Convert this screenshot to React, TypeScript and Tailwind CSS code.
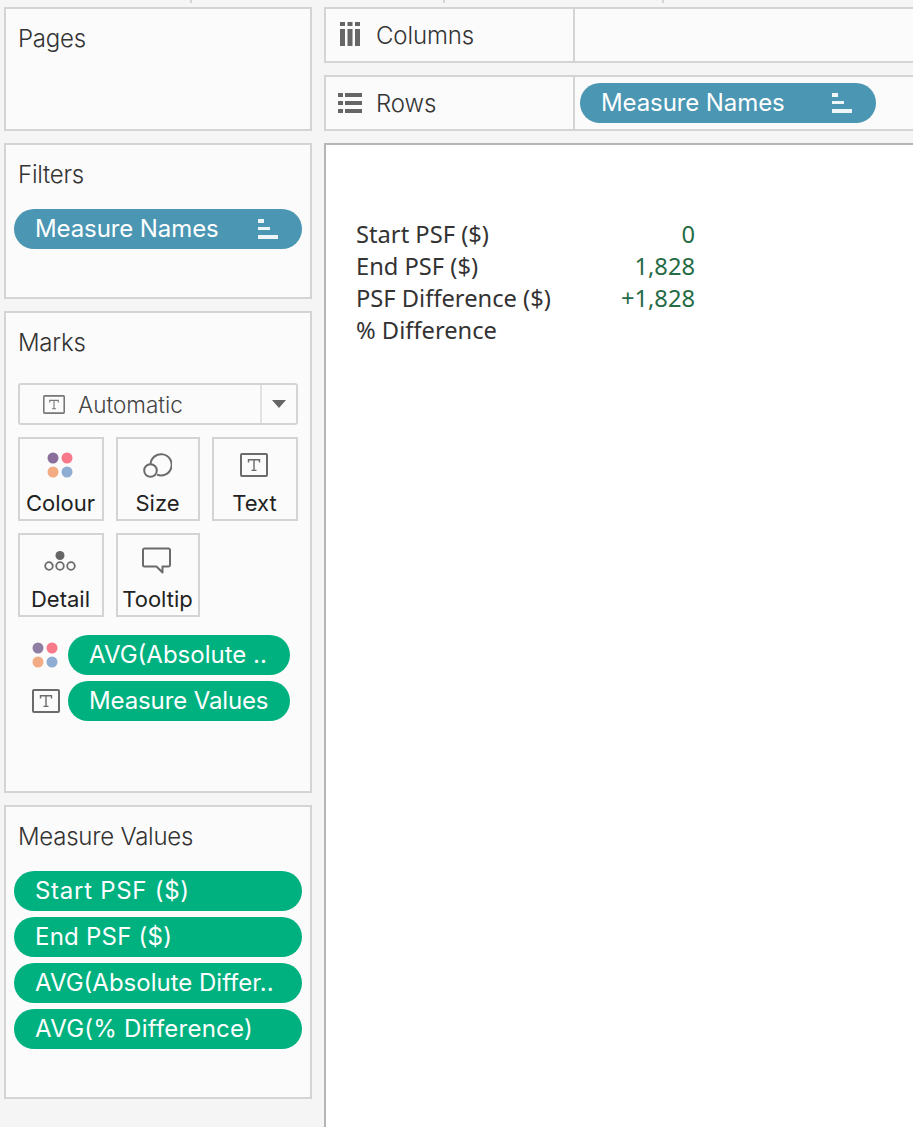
import React from "react";

const uiFont = "font-['Inter','Noto_Sans',sans-serif]";

function SortIcon() {
  return (
    <svg width="20" height="20" viewBox="0 0 20 20" className="block shrink-0" fill="#ecf5f8">
      <rect x="0" y="0" width="6" height="4" />
      <rect x="0" y="8" width="12" height="3" />
      <rect x="0" y="16" width="20" height="4" />
    </svg>
  );
}

function TIcon({ w, h, stroke = "#6b6b6b" }: { w: number; h: number; stroke?: string }) {
  return (
    <svg width={w} height={h} viewBox="0 0 28 24" className="block shrink-0" fill="none">
      <rect x="1" y="1" width="26" height="22" rx="1" stroke={stroke} strokeWidth="2" />
      <path d="M8.5 9.5V6.8h11v2.7M14 6.8v10.6M11.5 17.4h5" stroke={stroke} strokeWidth="1.4" />
    </svg>
  );
}

function DotsIcon({ size = 26, faded = false }: { size?: number; faded?: boolean }) {
  return (
    <svg width={size} height={size} viewBox="0 0 26 26" className="block shrink-0">
      <circle cx="6" cy="6" r="5.5" fill={faded ? "#8f7ea3" : "#8a6f9b"} />
      <circle cx="20" cy="6" r="5.5" fill="#f8798a" />
      <circle cx="6" cy="20" r="5.5" fill="#f2ab82" />
      <circle cx="20" cy="20" r="5.5" fill="#8fadd2" />
    </svg>
  );
}

function SizeIcon() {
  return (
    <svg width="30" height="30" viewBox="0 0 30 30" className="block" fill="none" stroke="#6b6b6b" strokeWidth="2">
      <path d="M8.5 14A10.6 10.6 0 1 1 15 24.6" />
      <circle cx="8.5" cy="20.5" r="6.3" />
    </svg>
  );
}

function DetailIcon() {
  return (
    <svg width="32" height="20" viewBox="0 0 32 20" className="block" fill="none" stroke="#6b6b6b" strokeWidth="1.8">
      <circle cx="16" cy="4.5" r="4.5" fill="#666" stroke="none" />
      <circle cx="5" cy="15" r="3.8" />
      <circle cx="16" cy="15" r="3.8" />
      <circle cx="27" cy="15" r="3.8" />
    </svg>
  );
}

function TooltipIcon() {
  return (
    <svg width="30" height="28" viewBox="0 0 30 28" className="block" fill="none" stroke="#6b6b6b" strokeWidth="2" strokeLinejoin="round">
      <path d="M2.5 1.5h24a1.5 1.5 0 0 1 1.5 1.5v15a1.5 1.5 0 0 1-1.5 1.5h-6v6l-6-6h-12a1.5 1.5 0 0 1-1.5-1.5V3a1.5 1.5 0 0 1 1.5-1.5z" />
    </svg>
  );
}

function ColumnsIcon() {
  return (
    <svg width="20" height="24" viewBox="0 0 20 24" className="block shrink-0" fill="#666">
      <rect x="0" y="0" width="5" height="4" />
      <rect x="7.5" y="0" width="5" height="4" />
      <rect x="15" y="0" width="5" height="4" />
      <rect x="0" y="7" width="5" height="17" />
      <rect x="7.5" y="7" width="5" height="17" />
      <rect x="15" y="7" width="5" height="17" />
    </svg>
  );
}

function RowsIcon() {
  return (
    <svg width="24" height="20" viewBox="0 0 24 20" className="block shrink-0" fill="#666">
      <rect x="0" y="0" width="5" height="4" />
      <rect x="7" y="0" width="17" height="4" />
      <rect x="0" y="8" width="5" height="4" />
      <rect x="7" y="8" width="17" height="4" />
      <rect x="0" y="16" width="5" height="4" />
      <rect x="7" y="16" width="17" height="4" />
    </svg>
  );
}

function Pill({ label, color, sort, className = "" }: { label: string; color: "blue" | "green"; sort?: boolean; className?: string }) {
  return (
    <div
      className={`flex h-10 items-center justify-between rounded-[20px] pl-[21px] text-[24px] leading-none whitespace-nowrap text-white ${
        color === "blue" ? "bg-[#4a96b3] tracking-[-0.004em]" : "bg-[#00b180]"
      } ${className}`}
    >
      <span>{label}</span>
      {sort ? <span className="mr-[24px]"><SortIcon /></span> : null}
    </div>
  );
}

function Panel({ title, className, children }: { title: string; className: string; children?: React.ReactNode }) {
  return (
    <section className={`flex w-[308px] flex-col border-2 border-[#d4d4d4] bg-[#fbfbfb] px-2 pt-[14px] ${className}`}>
      <h2 className="pl-[4px] text-[24px] leading-[32px] font-light tracking-[-0.01em] text-[#333]">{title}</h2>
      {children}
    </section>
  );
}

function MarkButton({ icon, label, className = "" }: { icon: React.ReactNode; label: string; className?: string }) {
  return (
    <div className={`flex h-[84px] flex-col items-center border-2 border-[#d4d4d4] text-[22px] leading-none text-[#222] ${className}`}>
      <div className="flex h-[48px] items-center justify-center pt-[4px] pr-[2px]">{icon}</div>
      <span className="pt-[1px] pr-[1px] leading-[30px]">{label}</span>
    </div>
  );
}

function Shelf({ icon, label, iconClass, children }: { icon: React.ReactNode; label: string; iconClass: string; children?: React.ReactNode }) {
  return (
    <div className="flex h-[56px] border-y-2 border-l-2 border-[#d4d4d4] bg-[#fbfbfb]">
      <div className="flex w-[249px] items-center border-r-2 border-[#d4d4d4] text-[24px] font-light tracking-[-0.005em] text-[#333]">
        <div className={iconClass}>{icon}</div>
        <span className="pt-[2px]">{label}</span>
      </div>
      <div className="flex flex-1 items-center pl-[5px]">{children}</div>
    </div>
  );
}

const rows: [string, string][] = [
  ["Start PSF ($)", "0"],
  ["End PSF ($)", "1,828"],
  ["PSF Difference ($)", "+1,828"],
  ["% Difference", ""],
];

export default function App() {
  return (
    <div className={`relative flex h-[1127px] w-[913px] overflow-hidden bg-[#f5f5f5] ${uiFont}`}>
      <span className="absolute top-0 left-[190px] h-[3px] w-[2px] bg-[#d4d4d4]" />
      <span className="absolute top-0 left-[443px] h-[3px] w-[2px] bg-[#d4d4d4]" />
      <span className="absolute top-0 left-[662px] h-[3px] w-[2px] bg-[#d4d4d4]" />

      <aside className="flex w-[324px] shrink-0 flex-col gap-3 pt-[7px] pl-1">
        <Panel title="Pages" className="h-[124px]" />
        <Panel title="Filters" className="h-[156px]">
          <Pill label="Measure Names" color="blue" sort className="mt-[18px]" />
        </Panel>
        <Panel title="Marks" className="h-[482px]">
          <div className="mt-[24px] ml-1 flex h-[42px] w-[280px] items-center rounded-[3px] border-2 border-[#d4d4d4] text-[22.5px] font-light text-[#444]">
            <div className="ml-[23px] mr-[13px]"><TIcon w={22} h={19} stroke="#777" /></div>
            <span className="flex-1 pt-[1px]">Automatic</span>
            <div className="flex h-full w-9 items-center justify-center border-l-2 border-[#e2e2e2]">
              <svg width="14" height="8" viewBox="0 0 14 8" className="block"><path d="M0 0h14L7 8z" fill="#666" /></svg>
            </div>
          </div>
          <div className="mt-3 ml-1 grid grid-cols-[86px_84px_86px] gap-3">
            <MarkButton icon={<DotsIcon />} label="Colour" />
            <MarkButton icon={<SizeIcon />} label="Size" />
            <MarkButton icon={<TIcon w={28} h={24} />} label="Text" />
            <MarkButton icon={<DetailIcon />} label="Detail" />
            <MarkButton icon={<TooltipIcon />} label="Tooltip" />
          </div>
          <div className="mt-[18px] flex flex-col gap-[6px]">
            <div className="flex items-center">
              <div className="ml-[18px] mr-[10px]"><DotsIcon faded /></div>
              <Pill label="AVG(Absolute .." color="green" className="w-[222px]" />
            </div>
            <div className="flex items-center">
              <div className="ml-[18px] mr-[8px]"><TIcon w={28} h={24} /></div>
              <Pill label="Measure Values" color="green" className="w-[222px] tracking-[-0.005em]" />
            </div>
          </div>
        </Panel>
        <Panel title="Measure Values" className="h-[294px]">
          <div className="mt-[18px] flex flex-col gap-[6px]">
            <Pill label="Start PSF ($)" color="green" className="tracking-[0.03em]" />
            <Pill label="End PSF ($)" color="green" className="tracking-[0.01em]" />
            <Pill label="AVG(Absolute Differ.." color="green" />
            <Pill label="AVG(% Difference)" color="green" className="tracking-[0.01em]" />
          </div>
        </Panel>
      </aside>

      <main className="flex min-w-0 flex-1 flex-col gap-3 pt-[7px]">
        <Shelf icon={<ColumnsIcon />} label="Columns" iconClass="ml-[14px] mr-[16px] -mt-[2px]" />
        <Shelf icon={<RowsIcon />} label="Rows" iconClass="ml-[12px] mr-[14px] -mt-[1px]">
          <Pill label="Measure Names" color="blue" sort className="w-[296px]" />
        </Shelf>
        <div className="flex-1 border-t-2 border-l-2 border-[#b5b5b5] bg-white pt-[73px] pl-[30px] font-['Noto_Sans',sans-serif] text-[23.7px] leading-[32px] text-[#333]">
          <div className="grid w-[339px] grid-cols-[1fr_auto]">
            {rows.map(([name, value]) => (
              <React.Fragment key={name}>
                <span>{name}</span>
                <span className="text-right text-[#256b45]">{value}</span>
              </React.Fragment>
            ))}
          </div>
        </div>
      </main>
    </div>
  );
}
